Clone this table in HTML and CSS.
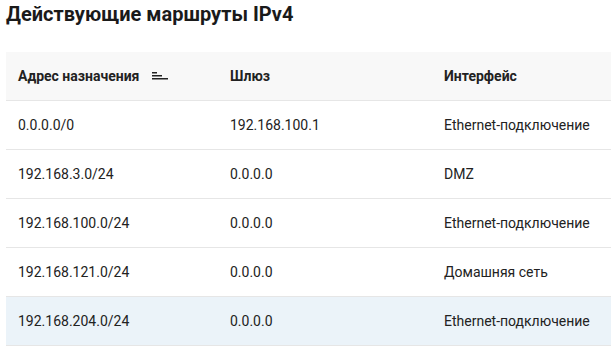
FILE: index.html
```html
<!DOCTYPE html>
<html lang="ru">
<head>
<meta charset="utf-8">
<link rel="stylesheet" href="styles.css">
</head>
<body>
<div class="page">
  <h1 class="title">Действующие маршруты IPv4</h1>
  <div class="table">
    <div class="row head">
      <div class="cell">Адрес назначения
        <svg class="sort" width="17" height="9" viewBox="0 0 17 9"><rect x="0" y="0" width="5" height="1.5" fill="#222"/><rect x="0" y="3" width="10" height="1.5" fill="#222"/><rect x="0" y="6" width="16" height="1.5" fill="#222"/></svg>
      </div>
      <div class="cell">Шлюз</div>
      <div class="cell">Интерфейс</div>
    </div>
    <div class="row">
      <div class="cell">0.0.0.0/0</div>
      <div class="cell">192.168.100.1</div>
      <div class="cell">Ethernet-подключение</div>
    </div>
    <div class="row">
      <div class="cell">192.168.3.0/24</div>
      <div class="cell">0.0.0.0</div>
      <div class="cell">DMZ</div>
    </div>
    <div class="row">
      <div class="cell">192.168.100.0/24</div>
      <div class="cell">0.0.0.0</div>
      <div class="cell">Ethernet-подключение</div>
    </div>
    <div class="row">
      <div class="cell">192.168.121.0/24</div>
      <div class="cell">0.0.0.0</div>
      <div class="cell">Домашняя сеть</div>
    </div>
    <div class="row selected">
      <div class="cell">192.168.204.0/24</div>
      <div class="cell">0.0.0.0</div>
      <div class="cell">Ethernet-подключение</div>
    </div>
  </div>
</div>
</body>
</html>
```
FILE: styles.css
```css
html, body {
  margin: 0;
  padding: 0;
  background: #fff;
}
.page {
  padding: 2px 1px 0 6px;
  font-family: Roboto, "Liberation Sans", sans-serif;
  color: #222;
}
.title {
  margin: 0 0 26px 0;
  font-size: 20px;
  font-weight: 700;
  line-height: 24px;
  color: #1a1a1a;
}
.table {
  display: flex;
  flex-direction: column;
}
.row {
  display: grid;
  grid-template-columns: 212px 214px 1fr;
  height: 48px;
  align-items: center;
  border-bottom: 1px solid #e6e6e6;
  font-size: 14px;
}
.row.head {
  background: #f8f8f8;
  font-weight: 700;
}
.row.selected {
  background: #ebf3f9;
}
.cell {
  padding-left: 12px;
  display: flex;
  align-items: center;
}
.sort {
  margin-left: 13px;
}
```
